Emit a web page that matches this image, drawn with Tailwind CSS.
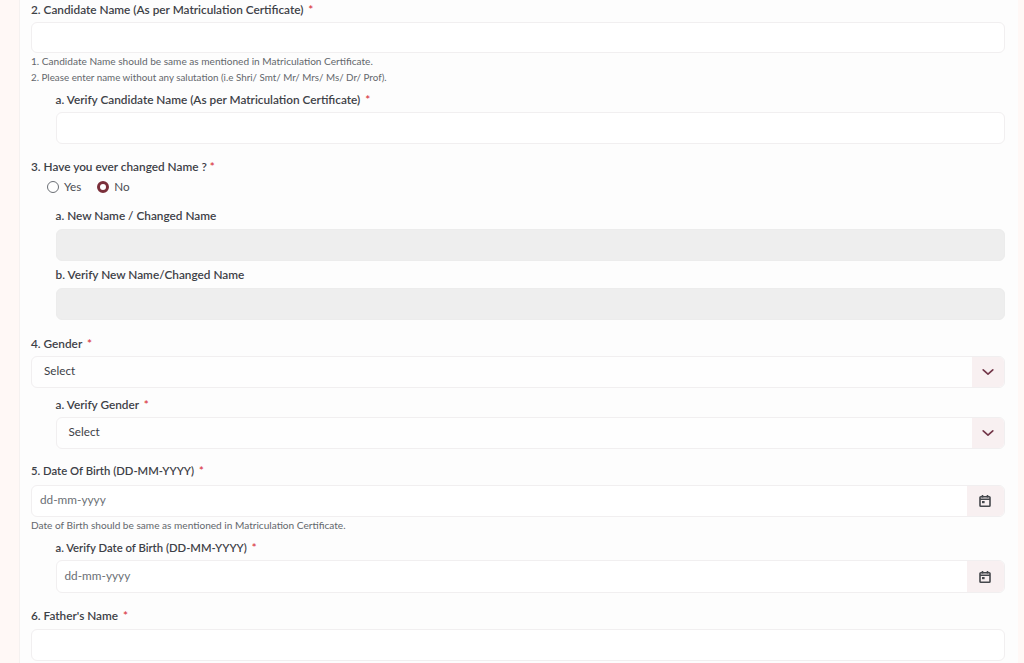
<!DOCTYPE html>
<html lang="en">
  <head>
    <meta charset="UTF-8" />
    <title>Application Form</title>
    <script src="https://cdn.jsdelivr.net/npm/@tailwindcss/browser@4"></script>
  </head>
  <body class="bg-[#fff8f6] font-['Lato','Noto_Sans',sans-serif] overflow-hidden">
    <main class="ml-[19px] mr-[6px] h-[663px] bg-[#fdfdfd] border-l border-[#f5f1f0] pl-[11px] pr-[13px] pt-[3px] text-[#3d4147] overflow-hidden">
      <!-- 2 -->
      <label class="block h-[14px] leading-[13px] text-[11.8px] font-semibold">2. Candidate Name (As per Matriculation Certificate) <span class="text-[#d9363e] ml-0.5">*</span></label>
      <input type="text" class="block mt-[5px] w-full h-[31px] bg-white border border-[#f1eff0] rounded-md outline-none" />
      <p class="text-[10.1px] leading-[16px] text-[#63676c]">1. Candidate Name should be same as mentioned in Matriculation Certificate.</p>
      <p class="text-[9.8px] leading-[16px] text-[#63676c]">2. Please enter name without any salutation (i.e Shri/ Smt/ Mr/ Mrs/ Ms/ Dr/ Prof).</p>
      <div class="pl-[24.5px] mt-[8px]">
        <label class="block h-[14px] leading-[13px] text-[11.8px] font-semibold">a. Verify Candidate Name (As per Matriculation Certificate) <span class="text-[#d9363e] ml-0.5">*</span></label>
        <input type="text" class="block mt-[5px] w-full h-[32px] bg-white border border-[#f1eff0] rounded-md outline-none" />
      </div>

      <!-- 3 -->
      <label class="block mt-[16px] h-[14px] leading-[13px] text-[11.8px] font-semibold">3. Have you ever changed Name ? <span class="text-[#d9363e]">*</span></label>
      <div class="flex items-center h-[18px] mt-[4px] pl-4 text-[11.7px] text-[#4a4e54]">
        <span class="w-[12px] h-[12px] rounded-full border border-[#6b6f75] bg-white"></span>
        <span class="ml-[5px]">Yes</span>
        <span class="ml-[16px] w-[12px] h-[12px] rounded-full border-[3px] border-[#7a2f3a] bg-white"></span>
        <span class="ml-[5px]">No</span>
      </div>
      <div class="pl-[24.5px] mt-[13px]">
        <label class="block h-[14px] leading-[13px] text-[11.8px] font-semibold">a. New Name / Changed Name</label>
        <input type="text" disabled class="block mt-[6px] w-full h-[32px] bg-[#eeeeee] border border-[#ececec] rounded-md outline-none" />
        <label class="block mt-[7px] h-[14px] leading-[13px] text-[11.8px] font-semibold">b. Verify New Name/Changed Name</label>
        <input type="text" disabled class="block mt-[6px] w-full h-[32px] bg-[#eeeeee] border border-[#ececec] rounded-md outline-none" />
      </div>

      <!-- 4 -->
      <label class="block mt-[17px] h-[14px] leading-[13px] text-[11.8px] font-semibold">4. Gender <span class="text-[#d9363e] ml-0.5">*</span></label>
      <div class="flex mt-[5px] h-[32px] border border-[#f1eff0] rounded-md bg-[#fefefe] overflow-hidden">
        <div class="flex-1 flex items-center pl-3 pb-[2px] text-[11.7px] text-[#3d4147]">Select</div>
        <div class="w-[32px] flex items-center justify-center bg-[#f8f0f1]">
          <svg class="w-[14px] h-[14px]" viewBox="0 0 16 16" fill="none" stroke="#74384a" stroke-width="1.9" stroke-linecap="round" stroke-linejoin="round"><path d="M2.5 5.5L8 10.5l5.5-5" /></svg>
        </div>
      </div>
      <div class="pl-[24.5px] mt-[10px]">
        <label class="block h-[14px] leading-[13px] text-[11.8px] font-semibold">a. Verify Gender <span class="text-[#d9363e] ml-0.5">*</span></label>
        <div class="flex mt-[5px] h-[32px] border border-[#f1eff0] rounded-md bg-[#fefefe] overflow-hidden">
          <div class="flex-1 flex items-center pl-3 pb-[2px] text-[11.7px] text-[#3d4147]">Select</div>
          <div class="w-[32px] flex items-center justify-center bg-[#f8f0f1]">
            <svg class="w-[14px] h-[14px]" viewBox="0 0 16 16" fill="none" stroke="#74384a" stroke-width="1.9" stroke-linecap="round" stroke-linejoin="round"><path d="M2.5 5.5L8 10.5l5.5-5" /></svg>
          </div>
        </div>
      </div>

      <!-- 5 -->
      <label class="block mt-[15px] h-[14px] leading-[13px] text-[11.3px] font-semibold">5. Date Of Birth (DD-MM-YYYY) <span class="text-[#d9363e] ml-0.5">*</span></label>
      <div class="flex mt-[7px] h-[32px] border border-[#f1eff0] rounded-md bg-white overflow-hidden">
        <div class="flex-1 flex items-center pl-2 pb-[3px] text-[11.8px] text-[#6b6f75]">dd-mm-yyyy</div>
        <div class="w-[37px] flex items-center justify-center bg-[#f8f0f1]">
          <svg class="w-[14px] h-[14px] -translate-x-px" viewBox="0 0 14 14" fill="none" stroke="#44474c" stroke-width="1.6"><rect x="2" y="2.7" width="10" height="9.6" rx="0.8" /><path d="M2 5.2h10M4.5 1v2.4M9.5 1v2.4" /><rect x="4" y="7" width="2.6" height="2.2" fill="#44474c" stroke="none" /></svg>
        </div>
      </div>
      <p class="text-[10.1px] leading-[16px] text-[#63676c]">Date of Birth should be same as mentioned in Matriculation Certificate.</p>
      <div class="pl-[24.5px] mt-[8px]">
        <label class="block h-[14px] leading-[13px] text-[11.3px] font-semibold">a. Verify Date of Birth (DD-MM-YYYY) <span class="text-[#d9363e] ml-0.5">*</span></label>
        <div class="flex mt-[5px] h-[33px] border border-[#f1eff0] rounded-md bg-white overflow-hidden">
          <div class="flex-1 flex items-center pl-2 pb-[1px] text-[11.8px] text-[#6b6f75]">dd-mm-yyyy</div>
          <div class="w-[37px] flex items-center justify-center bg-[#f8f0f1]">
            <svg class="w-[14px] h-[14px] -translate-x-px" viewBox="0 0 14 14" fill="none" stroke="#44474c" stroke-width="1.6"><rect x="2" y="2.7" width="10" height="9.6" rx="0.8" /><path d="M2 5.2h10M4.5 1v2.4M9.5 1v2.4" /><rect x="4" y="7" width="2.6" height="2.2" fill="#44474c" stroke="none" /></svg>
          </div>
        </div>
      </div>

      <!-- 6 -->
      <label class="block mt-[16px] h-[14px] leading-[13px] text-[11.8px] font-semibold">6. Father's Name <span class="text-[#d9363e] ml-0.5">*</span></label>
      <input type="text" class="block mt-[6px] w-full h-[32px] bg-white border border-[#f1eff0] rounded-md outline-none" />
    </main>
  </body>
</html>
